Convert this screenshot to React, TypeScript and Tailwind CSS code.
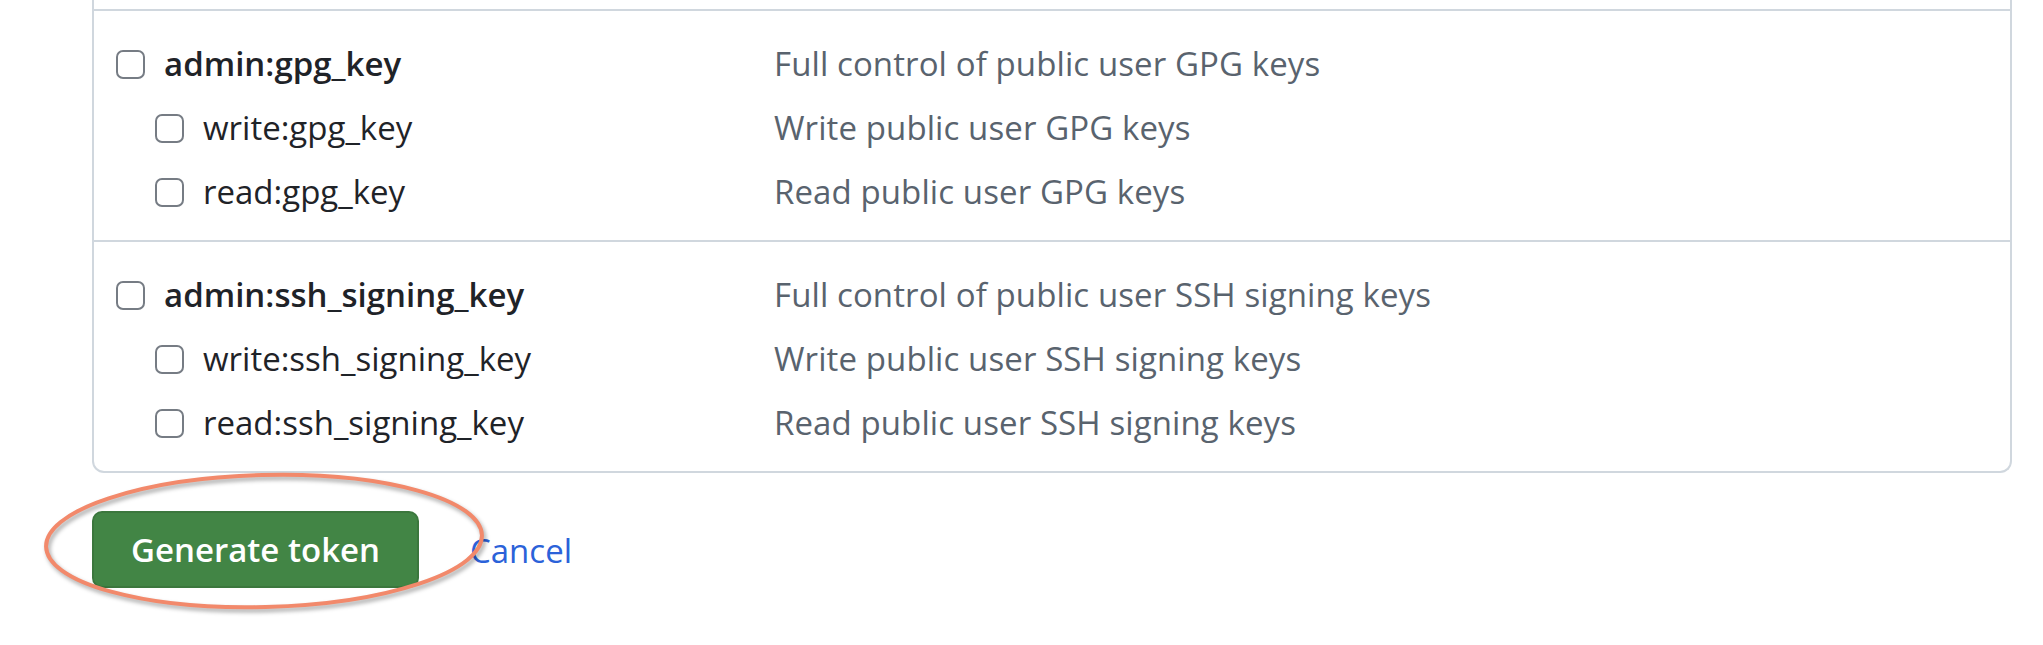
const font = { fontFamily: '"Segoe UI", "Open Sans", "Noto Sans", sans-serif' };

type Scope = { name: string; desc: string; child?: boolean };

const sections: Scope[][] = [
  [
    { name: 'admin:gpg_key', desc: 'Full control of public user GPG keys' },
    { name: 'write:gpg_key', desc: 'Write public user GPG keys', child: true },
    { name: 'read:gpg_key', desc: 'Read public user GPG keys', child: true },
  ],
  [
    { name: 'admin:ssh_signing_key', desc: 'Full control of public user SSH signing keys' },
    { name: 'write:ssh_signing_key', desc: 'Write public user SSH signing keys', child: true },
    { name: 'read:ssh_signing_key', desc: 'Read public user SSH signing keys', child: true },
  ],
];

function Checkbox() {
  return (
    <span className="block h-[29px] w-[29px] shrink-0 rounded-[7px] border-[2.5px] border-[#767c84] bg-white" />
  );
}

function ScopeRow({ scope }: { scope: Scope }) {
  return (
    <label className="flex h-16 items-center">
      <div className={`flex w-[658px] items-center ${scope.child ? 'pl-[39px]' : 'pl-0'}`}>
        <Checkbox />
        <span
          className={`ml-[19px] text-[33px] text-[#1f2328] ${scope.child ? 'font-normal' : 'font-semibold'}`}
        >
          {scope.name}
        </span>
      </div>
      <span className="text-[33px] tracking-[0.1px] text-[#59636e]">{scope.desc}</span>
    </label>
  );
}

export default function App() {
  return (
    <div className="h-[645px] w-[2043px] overflow-hidden bg-white" style={font}>
      <div className="ml-[92px] w-[1920px] rounded-b-[12px] border-x-2 border-b-2 border-[#d0d7de]">
        <div className="h-[9px]" />
        {sections.map((rows, i) => (
          <div key={i} className="border-t-2 border-[#d0d7de] pb-[16px] pl-[22px] pt-[21px]">
            {rows.map((s) => (
              <ScopeRow key={s.name} scope={s} />
            ))}
          </div>
        ))}
      </div>

      <div className="relative ml-[92px] mt-[38px] flex items-center">
        <button className="h-[77px] w-[327px] rounded-[10px] border-2 border-black/10 bg-[#428545] text-[33px] font-semibold text-white">
          Generate token
        </button>
        <a href="#" className="ml-[51px] mt-[3px] text-[33px] font-medium text-[#2b62d9]">
          Cancel
        </a>
        {/* annotation ring */}
        <svg
          className="pointer-events-none absolute left-[-50px] top-[-40px]"
          width="460"
          height="156"
          viewBox="0 0 460 156"
          style={{ filter: 'drop-shadow(2px 3px 2px rgba(0,0,0,0.35))' }}
        >
          <ellipse
            cx="222"
            cy="70"
            rx="218"
            ry="66"
            fill="none"
            stroke="#f2896b"
            strokeWidth="4"
            transform="rotate(-1.5 222 70)"
          />
        </svg>
      </div>
    </div>
  );
}
